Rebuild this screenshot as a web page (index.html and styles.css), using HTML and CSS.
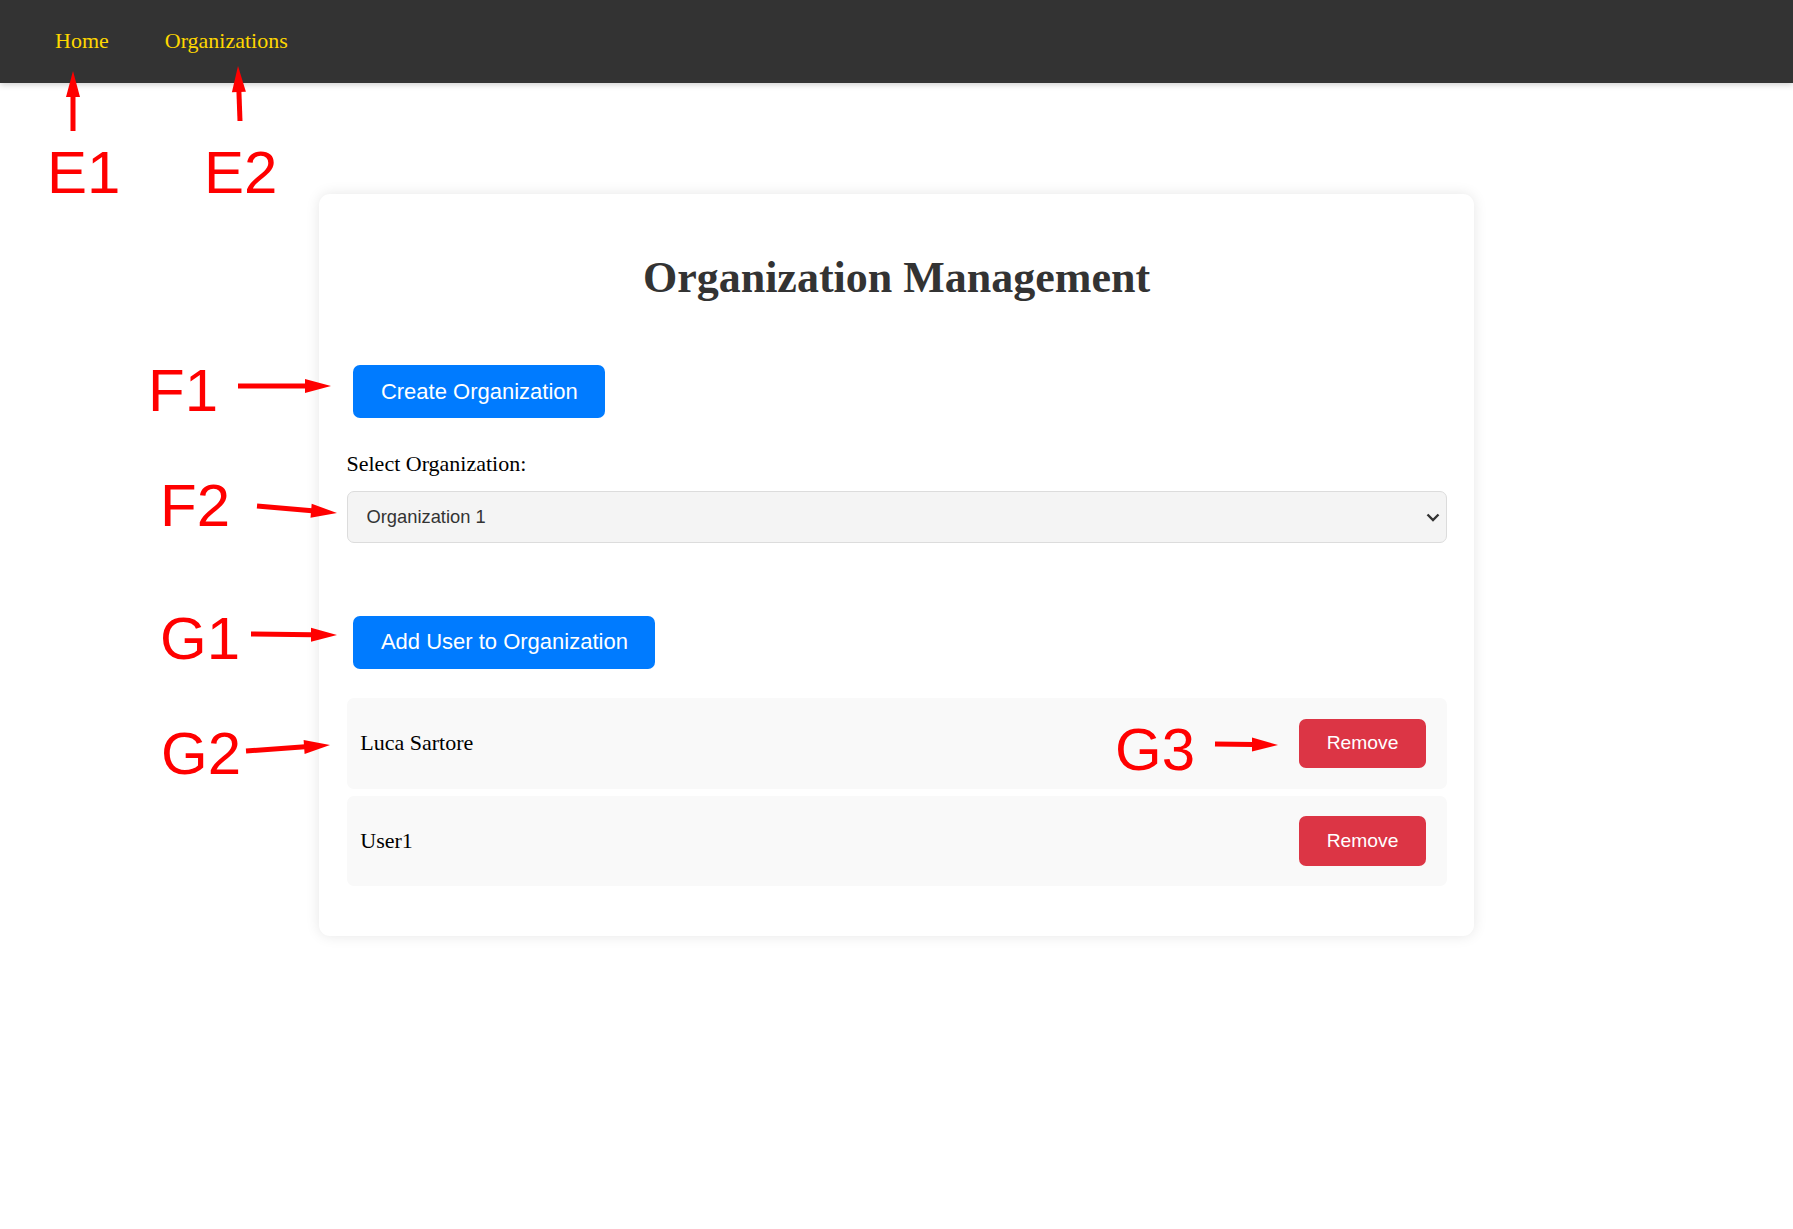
FILE: index.html
```html
<!DOCTYPE html>
<html lang="en">
<head>
<meta charset="utf-8">
<title>Organization Management</title>
<link rel="stylesheet" href="styles.css">
</head>
<body>
<nav class="navbar">
  <a class="nav-link" href="#">Home</a>
  <a class="nav-link" href="#">Organizations</a>
</nav>

<main class="page">
  <section class="card">
    <h1 class="title">Organization Management</h1>
    <div class="toolbar">
      <button class="btn btn-primary">Create Organization</button>
    </div>
    <label class="field-label" for="org">Select Organization:</label>
    <div class="select-wrap">
      <select class="org-select" id="org">
        <option>Organization 1</option>
      </select>
      <svg class="chevron" width="14" height="9" viewBox="0 0 14 9"><path d="M1.5 1.5 L7 7 L12.5 1.5" fill="none" stroke="#333" stroke-width="2.4"/></svg>
    </div>
    <div class="toolbar user-section">
      <button class="btn btn-primary">Add User to Organization</button>
    </div>
    <ul class="user-list">
      <li class="user-row"><span class="user-name">Luca Sartore</span><button class="btn btn-danger">Remove</button></li>
      <li class="user-row"><span class="user-name">User1</span><button class="btn btn-danger">Remove</button></li>
    </ul>
  </section>
</main>

<div class="annotations">
  <svg class="arrows" width="1793" height="1229" viewBox="0 0 1793 1229">
    <g stroke="#ff0000" stroke-width="5" fill="none">
      <line x1="73" y1="131" x2="73" y2="96"/>
      <line x1="240" y1="121" x2="238.9" y2="91"/>
      <line x1="238" y1="386" x2="306" y2="386"/>
      <line x1="257" y1="506" x2="312" y2="510.8"/>
      <line x1="251" y1="634" x2="312" y2="634.7"/>
      <line x1="246" y1="751" x2="305" y2="746.8"/>
      <line x1="1215" y1="744" x2="1253" y2="744.6"/>
    </g>
    <g fill="#ff0000">
      <polygon points="73,71 66,97 80,97"/>
      <polygon points="238,66 245.9,91.75 231.9,92.25"/>
      <polygon points="331,386 305,379 305,393"/>
      <polygon points="337,513 310.5,517.7 311.7,503.8"/>
      <polygon points="337,635 311,627.7 311,641.7"/>
      <polygon points="330,745 304.6,753.9 303.6,739.9"/>
      <polygon points="1278,745 1252,737.6 1252,751.6"/>
    </g>
  </svg>
  <span class="tag tag-e1">E1</span>
  <span class="tag tag-e2">E2</span>
  <span class="tag tag-f1">F1</span>
  <span class="tag tag-f2">F2</span>
  <span class="tag tag-g1">G1</span>
  <span class="tag tag-g2">G2</span>
  <span class="tag tag-g3">G3</span>
</div>
</body>
</html>
```

FILE: styles.css
```css
html, body {
  margin: 0;
  padding: 0;
  background: #ffffff;
}

body {
  font-family: "Liberation Serif", "Times New Roman", serif;
  font-size: 22px;
  color: #000;
  position: relative;
  min-height: 1229px;
}

.navbar {
  height: 83px;
  background: #333333;
  display: flex;
  align-items: center;
  gap: 56px;
  padding: 0 0 0 55px;
  box-shadow: 0 2px 6px rgba(0, 0, 0, 0.18);
}

.nav-link {
  color: #ffd700;
  text-decoration: none;
  font-size: 22px;
  line-height: 25px;
  margin-top: -2px;
}

.page {
  padding-top: 111px;
}

.card {
  box-sizing: border-box;
  max-width: 1155px;
  margin: 0 auto;
  padding: 27.5px;
  background: #fff;
  border-radius: 11px;
  box-shadow: 0 0 14px rgba(0, 0, 0, 0.1);
}

.title {
  font-size: 44px;
  font-weight: bold;
  color: #333;
  text-align: center;
  margin: 30px 0 28px;
  line-height: normal;
}

.toolbar {
  display: flex;
}

.title + .toolbar {
  margin-top: 55.5px;
}

.btn {
  font-family: "Liberation Sans", Arial, sans-serif;
  border: none;
  color: #fff;
  cursor: pointer;
  border-radius: 7px;
  line-height: normal;
}

.btn-primary {
  background: #007bff;
  font-size: 22px;
  padding: 13.75px 27.5px;
  margin: 6.875px;
}

.btn-danger {
  background: #dc3545;
  font-size: 19.25px;
  padding: 13.75px 27.5px;
  margin: 6.875px;
}

.field-label {
  display: block;
  margin-top: 25.5px;
  margin-bottom: 14px;
  line-height: normal;
}

.select-wrap {
  position: relative;
}

.org-select {
  display: block;
  box-sizing: border-box;
  width: 100%;
  height: 52px;
  padding: 0 40px 0 19px;
  font-family: "Liberation Sans", Arial, sans-serif;
  font-size: 18.33px;
  color: #333;
  background-color: #f4f4f4;
  border: 1px solid #dcdcdc;
  border-radius: 7px;
  appearance: none;
  -webkit-appearance: none;
}

.chevron {
  position: absolute;
  right: 7px;
  top: 22px;
  pointer-events: none;
}

.user-section {
  margin-top: 66px;
}

.user-list {
  list-style: none;
  margin: 22px 0;
  padding: 0;
  display: flex;
  flex-direction: column;
  gap: 6.875px;
}

.user-row {
  display: flex;
  align-items: center;
  justify-content: space-between;
  padding: 13.75px;
  background: #f9f9f9;
  border-radius: 7px;
}

.user-name {
  line-height: normal;
}

.annotations {
  position: absolute;
  top: 0;
  left: 0;
  width: 1793px;
  height: 1229px;
  pointer-events: none;
}

.arrows {
  position: absolute;
  top: 0;
  left: 0;
}

.tag {
  position: absolute;
  font-family: "Liberation Sans", Arial, sans-serif;
  font-size: 60px;
  line-height: 60px;
  color: #ff0000;
  white-space: nowrap;
}

.tag-e1 { left: 47px; top: 143px; }
.tag-e2 { left: 204px; top: 143px; }
.tag-f1 { left: 148px; top: 361px; }
.tag-f2 { left: 160px; top: 476px; }
.tag-g1 { left: 160px; top: 609px; }
.tag-g2 { left: 161px; top: 724px; }
.tag-g3 { left: 1115px; top: 720px; }
```
